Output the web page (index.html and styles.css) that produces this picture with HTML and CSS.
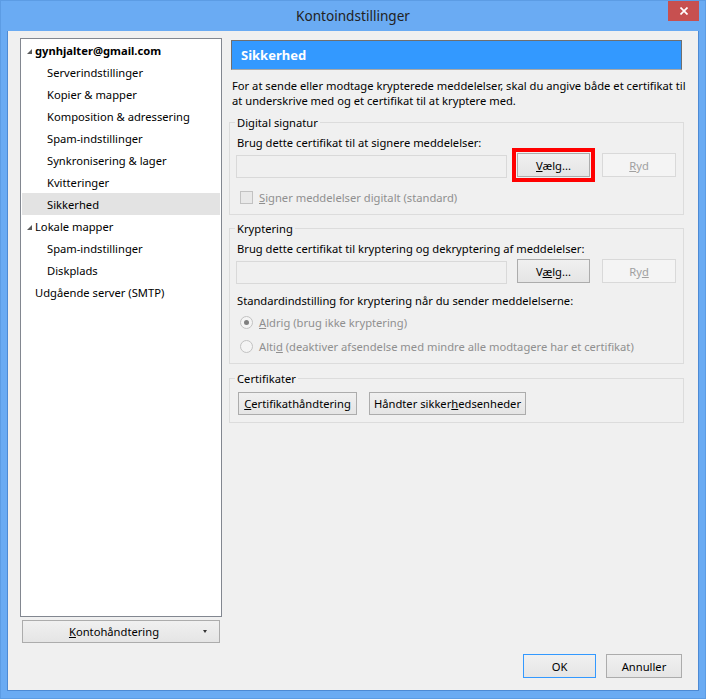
FILE: index.html
```html
<!DOCTYPE html>
<html lang="da">
<head>
  <meta charset="UTF-8" />
  <title>Kontoindstillinger</title>
  <link rel="stylesheet" href="styles.css">
</head>
<body>
  <div class="window">
    <div class="titlebar">
      <div></div>
      <div class="title">Kontoindstillinger</div>
      <button class="close" title="Luk">
        <svg width="8" height="8" viewBox="0 0 8 8"><path d="M0.5 0.5 L7.5 7.5 M7.5 0.5 L0.5 7.5" stroke="#fff" stroke-width="1.7" fill="none"/></svg>
      </button>
    </div>

    <div class="client">
      <div class="main">
        <div class="sidebar">
          <div class="tree">
            <div class="tree-row account"><span class="twisty"></span>gynhjalter@gmail.com</div>
            <div class="tree-row child">Serverindstillinger</div>
            <div class="tree-row child">Kopier &amp; mapper</div>
            <div class="tree-row child">Komposition &amp; adressering</div>
            <div class="tree-row child">Spam-indstillinger</div>
            <div class="tree-row child">Synkronisering &amp; lager</div>
            <div class="tree-row child">Kvitteringer</div>
            <div class="tree-row child selected">Sikkerhed</div>
            <div class="tree-row"><span class="twisty"></span>Lokale mapper</div>
            <div class="tree-row child">Spam-indstillinger</div>
            <div class="tree-row child">Diskplads</div>
            <div class="tree-row">Udgående server (SMTP)</div>
          </div>
          <button class="btn menu-btn"><span class="menu-label"><u>K</u>ontohåndtering</span><span class="caret"></span></button>
        </div>

        <div class="content">
          <div class="page-header">Sikkerhed</div>
          <p class="intro">For at sende eller modtage krypterede meddelelser, skal du angive både et certifikat til<br>at underskrive med og et certifikat til at kryptere med.</p>

          <fieldset class="group group-sign">
            <legend>Digital signatur</legend>
            <div class="field-label">Brug dette certifikat til at signere meddelelser:</div>
            <div class="cert-row">
              <div class="textbox"></div>
              <button class="btn choose marked"><u>V</u>ælg...</button>
              <button class="btn clear" disabled><u>R</u>yd</button>
            </div>
            <div class="option disabled sign-option"><span class="checkbox"></span><span><u>S</u>igner meddelelser digitalt (standard)</span></div>
          </fieldset>

          <fieldset class="group group-crypt">
            <legend>Kryptering</legend>
            <div class="field-label">Brug dette certifikat til kryptering og dekryptering af meddelelser:</div>
            <div class="cert-row">
              <div class="textbox"></div>
              <button class="btn choose">V<u>æ</u>lg...</button>
              <button class="btn clear" disabled>Ry<u>d</u></button>
            </div>
            <div class="field-label default-label">Standardindstilling for kryptering når du sender meddelelserne:</div>
            <div class="option disabled radio-first"><span class="radio checked"></span><span><u>A</u>ldrig (brug ikke kryptering)</span></div>
            <div class="option disabled radio-second"><span class="radio"></span><span>Alti<u>d</u> (deaktiver afsendelse med mindre alle modtagere har et certifikat)</span></div>
          </fieldset>

          <fieldset class="group group-certs">
            <legend>Certifikater</legend>
            <div class="cert-buttons">
              <button class="btn manage"><u>C</u>ertifikathåndtering</button>
              <button class="btn devices">Håndter sikker<u>h</u>edsenheder</button>
            </div>
          </fieldset>
        </div>
      </div>

      <div class="footer">
        <button class="btn ok default">OK</button>
        <button class="btn cancel">Annuller</button>
      </div>
    </div>
  </div>
</body>
</html>
```

FILE: styles.css
```css
body {
  margin: 0;
  font-family: "Noto Sans", sans-serif;
  font-size: 11.2px;
  color: #000000;
  background: #6aabf3;
}

.window {
  width: 706px;
  height: 699px;
  box-sizing: border-box;
  display: flex;
  flex-direction: column;
  padding: 0 6px 7px 6px;
  background: #6aabf3;
  border: 1px solid #5c9ce4;
}

.titlebar {
  height: 30px;
  display: grid;
  grid-template-columns: 1fr auto 1fr;
  flex-shrink: 0;
}

.title {
  font-size: 13.6px;
  line-height: 30px;
  color: #222222;
}

.close {
  justify-self: end;
  align-self: start;
  width: 31px;
  height: 20px;
  padding: 0;
  border: none;
  background: #c75050;
  display: flex;
  align-items: center;
  justify-content: center;
}

.client {
  flex: 1;
  display: flex;
  flex-direction: column;
  background: #f0f0f0;
  border: 1px solid #4d8ad4;
  border-top: none;
  padding: 7px 14px 12px 12px;
  min-height: 0;
}

.main {
  flex: 1;
  display: flex;
  gap: 7px;
  min-height: 0;
}

/* left column */

.sidebar {
  width: 202px;
  display: flex;
  flex-direction: column;
}

.tree {
  flex: 1;
  background: #ffffff;
  border: 1px solid #828790;
}

.tree-row {
  height: 22px;
  display: flex;
  align-items: center;
  padding-left: 14px;
  white-space: nowrap;
}

.tree-row.account {
  font-weight: bold;
}

.tree-row.child {
  padding-left: 26px;
}

.tree-row.selected {
  background: #e3e3e3;
  margin: 0 1px;
  padding-left: 25px;
}

.twisty {
  width: 0;
  height: 0;
  margin-left: -8px;
  margin-right: 3px;
  margin-top: 3px;
  border-left: 5px solid transparent;
  border-bottom: 5px solid #595959;
}

.btn {
  font-family: inherit;
  font-size: 11.2px;
  color: #000000;
  height: 24px;
  padding: 0;
  margin: 0;
  background: linear-gradient(#f0f0f0, #e5e5e5);
  border: 1px solid #acacac;
  border-radius: 0;
}

.btn:disabled {
  background: #f4f4f4;
  border-color: #d9d9d9;
  color: #a0a0a0;
}

.menu-btn {
  margin: 3px 0 0 2px;
  width: 198px;
  height: 23px;
  display: flex;
  align-items: center;
  padding: 0 8px 0 8px;
}

.menu-label {
  flex: 1;
  text-align: center;
}

.caret {
  width: 0;
  height: 0;
  margin: 0 4px 0 6px;
  border-left: 2px solid transparent;
  border-right: 2px solid transparent;
  border-top: 3px solid #333333;
}

/* right column */

.content {
  flex: 1;
  display: flex;
  flex-direction: column;
  min-width: 0;
}

.page-header {
  margin: 2px 2px 0;
  height: 30px;
  box-sizing: border-box;
  display: flex;
  align-items: center;
  padding-left: 9px;
  background: #3399ff;
  border: 1px solid #6f6f6f;
  border-bottom-color: #a8a8a8;
  color: #ffffff;
  font-weight: bold;
  font-size: 13px;
}

.intro {
  margin: 8px 0 0;
  padding-left: 3px;
  line-height: 15px;
  white-space: nowrap;
}

.group {
  margin: 0;
  min-width: 0;
  border: 1px solid #dcdcdc;
  padding: 5px 7px 9px 7px;
}

.group legend {
  padding: 0 2px;
  margin-left: -2px;
  line-height: 15px;
}

.group-sign {
  margin-top: 7px;
}

.group-crypt {
  margin-top: 6px;
}

.group-certs {
  margin-top: 7px;
  padding-top: 6px;
  padding-bottom: 7px;
}

.field-label {
  line-height: 15px;
  white-space: nowrap;
}

.cert-row {
  display: flex;
  align-items: center;
  margin-top: 3px;
  height: 24px;
}

.textbox {
  flex: 1;
  height: 21px;
  margin-left: -1px;
  margin-top: 2px;
  background: #f0f0f0;
  border: 1px solid #d9d9d9;
}

.choose {
  width: 73px;
  margin-left: 10px;
}

.choose.marked {
  outline: 4px solid #ff0000;
  outline-offset: 1px;
}

.clear {
  width: 74px;
  margin-left: 12px;
}

.option {
  display: flex;
  align-items: center;
  line-height: 15px;
  padding-left: 3px;
  white-space: nowrap;
}

.option.disabled {
  color: #8f8f8f;
}

.sign-option {
  margin-top: 13px;
}

.default-label {
  margin-top: 10px;
}

.radio-first {
  margin-top: 7px;
}

.radio-second {
  margin-top: 9px;
}

.checkbox,
.radio {
  width: 13px;
  height: 13px;
  box-sizing: border-box;
  margin-right: 6px;
  flex-shrink: 0;
  border: 1px solid #c2c2c2;
  background: #e9e9e9;
}

.radio {
  border-radius: 50%;
  background: #f4f4f4;
  display: flex;
  align-items: center;
  justify-content: center;
}

.radio.checked::after {
  content: "";
  width: 5px;
  height: 5px;
  border-radius: 50%;
  background: #7f7f7f;
}

.cert-buttons {
  display: flex;
  gap: 12px;
  padding-left: 1px;
}

.cert-buttons .btn {
  height: 23px;
}

.manage {
  width: 119px;
}

.devices {
  width: 157px;
}

/* footer */

.footer {
  display: flex;
  justify-content: flex-end;
  gap: 10px;
  margin-top: 11px;
  padding-right: 2px;
}

.ok {
  width: 73px;
}

.cancel {
  width: 76px;
}

.btn.default {
  border-color: #3399ff;
}
```
